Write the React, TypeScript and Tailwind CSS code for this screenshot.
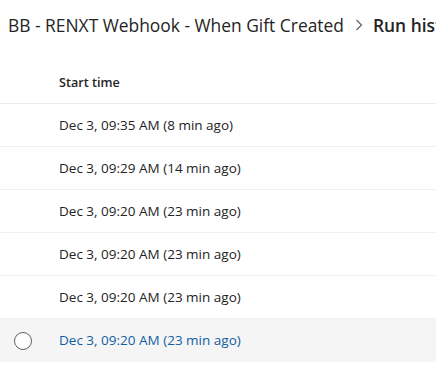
const rows = [
  "Dec 3, 09:35 AM (8 min ago)",
  "Dec 3, 09:29 AM (14 min ago)",
  "Dec 3, 09:20 AM (23 min ago)",
  "Dec 3, 09:20 AM (23 min ago)",
  "Dec 3, 09:20 AM (23 min ago)",
  "Dec 3, 09:20 AM (23 min ago)",
]

export default function App() {
  return (
    <div
      className="w-[436px] h-[365px] overflow-hidden bg-white text-[#242424]"
      style={{ fontFamily: "'Segoe UI', 'Open Sans', sans-serif" }}
    >
      <div className="h-[50px] flex items-center pl-[8px] whitespace-nowrap text-[17.4px] overflow-hidden">
        <span className="shrink-0">BB - RENXT Webhook - When Gift Created</span>
        <svg className="shrink-0 ml-[11px] mr-[10px] w-[8px] h-[12px]" viewBox="0 0 8 12" fill="none">
          <path d="M1.5 1 L6.5 6 L1.5 11" stroke="#616161" strokeWidth="1.2" />
        </svg>
        <span className="shrink-0 font-semibold">Run history</span>
      </div>

      <div className="h-[54px] flex items-end border-b border-[#ebebeb]">
        <div className="h-[43px] flex items-center pl-[59px] pt-[4px] text-[12.6px] font-semibold">Start time</div>
      </div>

      {rows.map((r, i) => {
        const last = i === rows.length - 1
        return (
          <div
            key={i}
            className={
              last
                ? "h-[43px] flex items-center bg-[#f5f5f5] text-[#115ea3] text-[13.5px]"
                : "h-[43px] flex items-center border-b border-[#f0f0f0] text-[13.5px]"
            }
          >
            <div className="w-[59px] flex items-center justify-center pr-[13px]">
              {last && <div className="w-[18px] h-[18px] rounded-full border border-[#616161] bg-white" />}
            </div>
            <span>{r}</span>
          </div>
        )
      })}
    </div>
  )
}
